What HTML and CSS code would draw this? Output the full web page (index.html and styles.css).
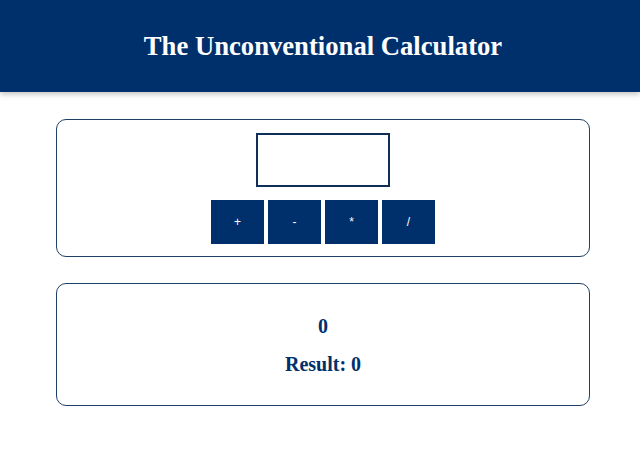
FILE: index.html
```html
<!DOCTYPE html>
<html>
<head>
<meta charset="utf-8">
<link rel="stylesheet" href="styles.css">
</head>
<body>
<header class="app-header">
  <h1 class="app-title">The Unconventional Calculator</h1>
</header>
<main class="app-main">
  <section class="card input-card">
    <input class="num-input" type="number">
    <div class="ops">
      <button class="op">+</button>
      <button class="op">-</button>
      <button class="op">*</button>
      <button class="op">/</button>
    </div>
  </section>
  <section class="card result-card">
    <h2 class="calc">0</h2>
    <h2 class="result">Result: 0</h2>
  </section>
</main>
</body>
</html>
```
FILE: styles.css
```css
* { box-sizing: border-box; }
html, body { margin: 0; padding: 0; background: #fff; }
body { font-family: "Liberation Serif", "Times New Roman", serif; }

.app-header {
  height: 92px;
  padding-left: 6px;
  background: #00306b;
  display: flex;
  align-items: center;
  justify-content: center;
  box-shadow: 0 2px 6px rgba(0, 0, 0, 0.26);
}
.app-title {
  margin: 0;
  color: #fff;
  font-size: 26.67px;
  font-weight: bold;
}

.app-main {
  padding: 27px 50px 0 56px;
  display: flex;
  flex-direction: column;
  gap: 26px;
}
.card {
  width: 534px;
  border: 1px solid #1e3f66;
  border-radius: 10px;
  display: flex;
  flex-direction: column;
  align-items: center;
}
.input-card {
  padding: 13px 0 12px;
  gap: 13px;
}
.num-input {
  width: 134px;
  height: 54px;
  border: 2px solid #0f2f57;
  margin: 0;
  outline: none;
  font-size: 16px;
}
.ops { display: flex; gap: 4px; }
.op {
  width: 53px;
  height: 44px;
  margin: 0;
  border: 0;
  background: #00306b;
  color: #fff;
  font-family: "Liberation Sans", Arial, sans-serif;
  font-size: 12px;
  padding: 0;
}
.result-card {
  padding: 31px 0 30px;
  gap: 16px;
}
.calc, .result {
  margin: 0;
  color: #00306b;
  font-size: 20px;
  line-height: 22px;
  font-weight: bold;
}
```
